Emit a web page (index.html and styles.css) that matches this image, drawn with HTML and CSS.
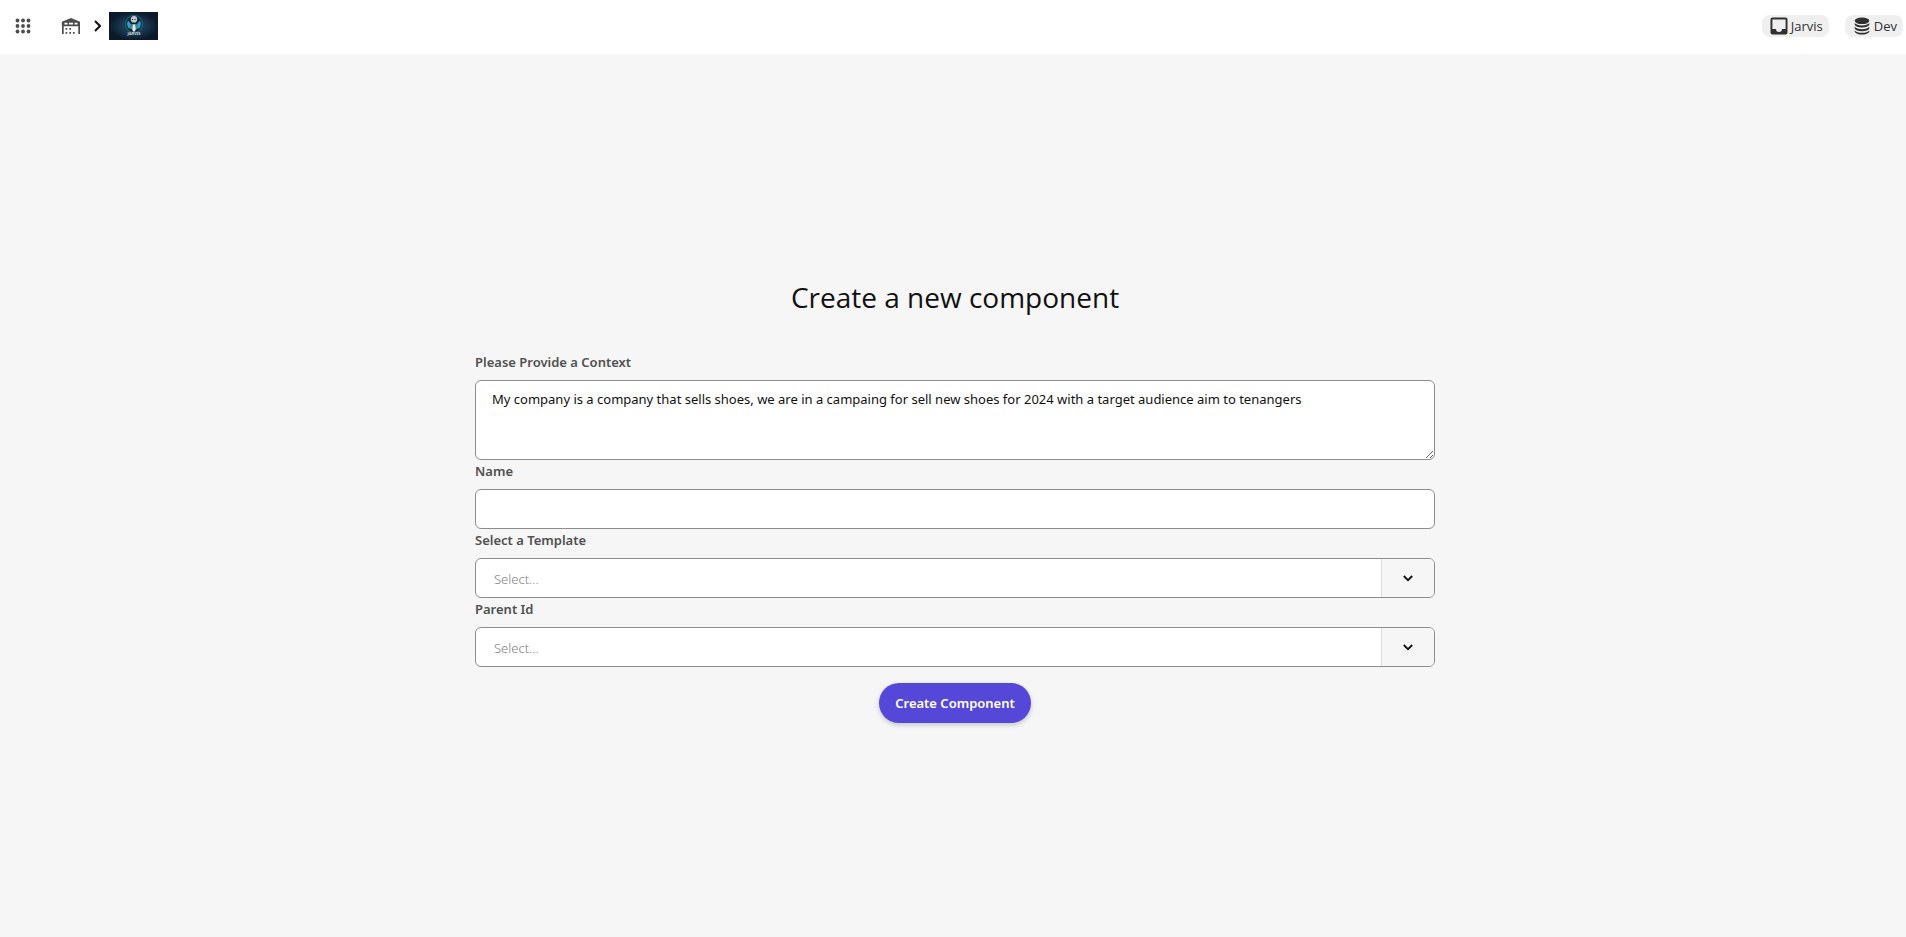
FILE: index.html
```html
<!DOCTYPE html>
<html lang="en">
<head>
<meta charset="utf-8">
<title>Create a new component</title>
<link rel="stylesheet" href="styles.css">
</head>
<body>
<header class="topbar">
  <nav class="crumbs" aria-label="Breadcrumb">
    <button class="icon-button apps" type="button" aria-label="Apps">
      <svg width="16" height="16" viewBox="0 0 16 16" fill="#4d4d4d"><circle cx="2.5" cy="2.5" r="1.9"/><circle cx="8" cy="2.5" r="1.9"/><circle cx="13.5" cy="2.5" r="1.9"/><circle cx="2.5" cy="8" r="1.9"/><circle cx="8" cy="8" r="1.9"/><circle cx="13.5" cy="8" r="1.9"/><circle cx="2.5" cy="13.5" r="1.9"/><circle cx="8" cy="13.5" r="1.9"/><circle cx="13.5" cy="13.5" r="1.9"/></svg>
    </button>
    <a class="crumb home" href="#" aria-label="Home">
      <svg width="20" height="18" viewBox="0 0 20 18" fill="#4d4d4d"><path fill-rule="evenodd" d="M10 1 .8 4.800v3.800H1V17h1.700V9.200h14.600V17H19V4.800zM3.500 5.700h3v1.800h-3zm4.500 0h4v1.800H8zm5.500 0h3v1.800h-3z"/><path d="M4.500 11h1.700v1.700H4.500zm3.800 0H10v1.700H8.300zM4.500 15h1.700v1.700H4.500zm3.800 0H10v1.700H8.300zm3.700 0h1.700v1.700H12z"/></svg>
    </a>
    <svg class="separator" width="8" height="12" viewBox="0 0 8 12" fill="none" stroke="#111" stroke-width="2"><path d="m2 1 5 5-5 5"/></svg>
    <a class="crumb" href="#" aria-label="Jarvis home">
      <svg class="logo" width="49" height="28" viewBox="0 0 49 28">
        <defs><radialGradient id="night"><stop stop-color="#225069"/><stop offset=".6" stop-color="#173349"/><stop offset="1" stop-color="#0b192b"/></radialGradient></defs>
        <rect width="49" height="28" fill="url(#night)"/>
        <circle cx="25" cy="12" r="8.500" fill="#0b2233" stroke="#256f88"/>
        <path d="M19 8.500q-2 4 .5 7.500l3 1-.5-5zM31 8.500q2 4-.5 7.500l-3 1 .5-5z" fill="#27a4cb"/>
        <path d="m22 5.500 2-1.500h2l2 1.500.3 2.500-1.300 2.500h-4L21.700 8z" fill="#bdc9cd"/>
        <path d="M23 7h1v1h-1zm2.500 0h1v1h-1z" fill="#172e3c"/>
        <path d="m20.500 14 2.500-2h4l2.500 2-1.500 3-3 2-3-2z" fill="#557b8c"/>
        <path d="m24 12.500h2l.7 4-.7 3h-2l-.7-3z" fill="#e0eaec"/>
        <text class="logo-text" x="25" y="23" text-anchor="middle">JARVIS</text>
      </svg>
    </a>
  </nav>
  <div class="tags">
    <button class="tag" type="button">
      <svg width="18" height="18" viewBox="0 0 18 18" fill="#303030"><path fill-rule="evenodd" d="M2.500.5h13a2 2 0 0 1 2 2v13a2 2 0 0 1-2 2h-13a2 2 0 0 1-2-2v-13a2 2 0 0 1 2-2zM2.400 2.400v9.600H6a3 3 0 0 0 6 0h3.600V2.400z"/></svg>
      <span>Jarvis</span>
    </button>
    <button class="tag" type="button">
      <svg width="18" height="18" viewBox="0 0 18 18" fill="#303030"><ellipse cx="9" cy="3.800" rx="7.300" ry="3.300"/><path d="M1.700 6q2 2.400 7.300 2.400T16.300 6v1.800q-1.500 2.700-7.300 2.700T1.700 7.800zM1.700 9.800q2 2.400 7.300 2.400t7.300-2.400v1.800q-1.500 2.700-7.300 2.700t-7.300-2.700zM1.700 13.400q2 2.300 7.300 2.300t7.300-2.300v1.300Q14.800 17.500 9 17.500t-7.300-2.800z"/></svg>
      <span>Dev</span>
    </button>
  </div>
</header>
<main class="page">
  <form class="form">
    <h1 class="title">Create a new component</h1>
    <label class="label" for="context">Please Provide a Context</label>
    <textarea class="control context" id="context" spellcheck="false">My company is a company that sells shoes, we are in a campaing for sell new shoes for 2024 with a target audience aim to tenangers</textarea>
    <label class="label" for="name">Name</label>
    <input class="control" id="name" type="text">
    <label class="label" for="template">Select a Template</label>
    <div class="picker">
      <select class="control select" id="template"><option>Select...</option></select>
      <span class="toggle"><svg width="10" height="7" viewBox="0 0 10 7" fill="none" stroke="#111" stroke-width="1.800"><path d="m.8 1 4.200 4.200L9.200 1"/></svg></span>
    </div>
    <label class="label" for="parent">Parent Id</label>
    <div class="picker">
      <select class="control select" id="parent"><option>Select...</option></select>
      <span class="toggle"><svg width="10" height="7" viewBox="0 0 10 7" fill="none" stroke="#111" stroke-width="1.800"><path d="m.8 1 4.200 4.200L9.200 1"/></svg></span>
    </div>
    <button class="submit" type="submit">Create Component</button>
  </form>
</main>
</body>
</html>
```
FILE: styles.css
```css
* {
  box-sizing: border-box;
}

body {
  margin: 0;
  min-height: 100vh;
  display: flex;
  flex-direction: column;
  background: #f6f6f6;
  color: #111;
  font-family: "Segoe UI", "Noto Sans", sans-serif;
  font-size: 14px;
}

button,
input,
textarea,
select {
  font: inherit;
}

svg {
  display: block;
  flex: none;
}

.topbar {
  display: flex;
  align-items: center;
  justify-content: space-between;
  height: 54px;
  padding: 0 3px 2px 15px;
  background: #fff;
}

.crumbs {
  display: flex;
  align-items: center;
  gap: 8px;
}

.icon-button {
  padding: 0;
  border: 0;
  background: none;
}

.apps {
  margin-right: 22px;
}

.home {
  margin-right: 4px;
}

.logo-text {
  font: bold 4px "Noto Sans", sans-serif;
  fill: #cbd8dc;
}

.tags {
  display: flex;
  gap: 16px;
}

.tag {
  display: flex;
  align-items: center;
  gap: 3px;
  height: 22px;
  padding: 0 6px 0 8px;
  border: 0;
  border-radius: 8px;
  background: #efefef;
  color: #303030;
  font-family: "Segoe UI", "Open Sans", sans-serif;
  font-size: 13px;
}

.page {
  flex: 1;
  display: flex;
  align-items: center;
  justify-content: center;
  padding: 9px 0 0 4px;
}

.form {
  display: flex;
  flex-direction: column;
  width: 100%;
  max-width: 960px;
}

.title {
  margin: 0 0 34px;
  font-family: "Segoe UI", "Open Sans", sans-serif;
  font-size: 28px;
  font-weight: 400;
  line-height: 40px;
  text-align: center;
}

.label {
  margin-bottom: 7px;
  color: #505050;
  font-size: 13px;
  font-weight: 600;
  line-height: 22px;
}

.control {
  display: block;
  width: 100%;
  height: 40px;
  padding: 0 17px;
  border: 1px solid #8d8d8d;
  border-radius: 6px;
  background: #fff;
  color: #111;
}

.context {
  height: 80px;
  padding: 8px 16px;
  line-height: 20px;
  font-size: 13px;
  resize: vertical;
}

.picker {
  display: grid;
}

.picker > * {
  grid-area: 1 / 1;
}

.select {
  appearance: none;
  padding: 2px 18px 0;
  color: #808080;
  font-weight: 300;
  font-size: 13px;
}

.toggle {
  display: flex;
  align-items: center;
  justify-content: center;
  justify-self: end;
  width: 53px;
  margin: 1px;
  border-left: 1px solid #ddd;
  border-radius: 0 5px 5px 0;
  background: #f6f6f6;
  pointer-events: none;
}

.submit {
  align-self: center;
  height: 40px;
  margin-top: 16px;
  padding: 0 16px;
  border: 0;
  border-radius: 20px;
  background: #5547d7;
  color: #fff;
  font-size: 13px;
  font-weight: 600;
  box-shadow: 0 2px 5px rgba(0, 0, 0, 0.2);
}
```
